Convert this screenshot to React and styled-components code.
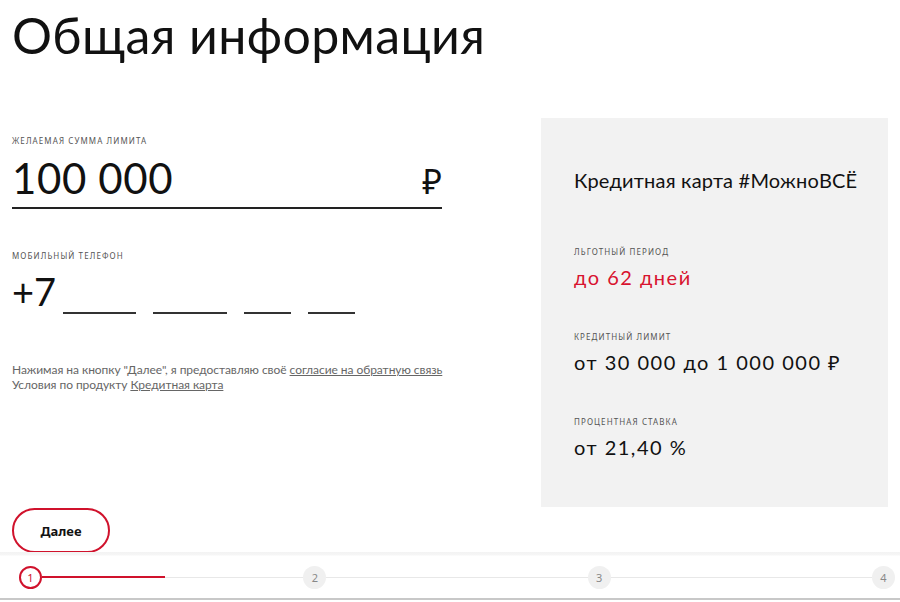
import React from 'react';
import styled, { createGlobalStyle } from 'styled-components';

const GlobalStyle = createGlobalStyle`
    html, body {
        margin: 0;
        padding: 0;
        background: #fff;
        font-family: Lato, "Noto Sans", sans-serif;
        color: #111;
    }
`;

const Page = styled.div`
    width: 900px;
    height: 602px;
    overflow: hidden;
    display: flex;
    flex-direction: column;
`;

const Title = styled.h1`
    margin: 0;
    padding: 2px 0 0 12px;
    height: 116px;
    font-weight: 400;
    font-size: 50px;
    line-height: 66px;
    letter-spacing: 0.4px;
`;

const Content = styled.div`
    display: flex;
    height: 389px;
    padding-left: 12px;
`;

const Form = styled.div`
    width: 430px;
    padding-top: 18px;
    margin-right: 99px;
`;

const Label = styled.div`
    font-size: 8px;
    line-height: 10px;
    letter-spacing: 1.1px;
    text-transform: uppercase;
    color: #555;
    font-family: "Noto Sans", sans-serif;
`;

const AmountRow = styled.div`
    display: flex;
    justify-content: space-between;
    align-items: baseline;
    border-bottom: 2px solid #222;
    height: 58px;
    margin-top: 5px;
    box-sizing: border-box;
`;

const Amount = styled.div`
    font-size: 42px;
    line-height: 54px;
    letter-spacing: 0.6px;
`;

const Ruble = styled.div`
    font-size: 34px;
    line-height: 54px;
`;

const Field = styled.div`
    margin-top: ${p => p.$top}px;
`;

const PhoneRow = styled.div`
    display: flex;
    align-items: flex-end;
    margin-top: 10px;
    height: 40px;
`;

const Prefix = styled.div`
    font-size: 38px;
    line-height: 40px;
    margin-right: 7px;
`;

const Blank = styled.div`
    width: ${p => p.$w}px;
    border-bottom: 2px solid #333;
    margin-right: 17px;
    margin-bottom: -3px;
`;

const Note = styled.p`
    margin: 51px 0 0;
    font-size: 12px;
    line-height: 15px;
    letter-spacing: -0.05px;
    color: #666;
    white-space: nowrap;
`;

const Link = styled.a`
    color: #666;
    text-decoration: underline;
`;

const Panel = styled.div`
    width: 347px;
    background: #f2f2f2;
    padding: 48px 0 0 33px;
    box-sizing: border-box;
`;

const CardName = styled.div`
    font-size: 20px;
    line-height: 28px;
    letter-spacing: 0.2px;
    margin-bottom: 53px;
`;

const Block = styled.div`
    margin-bottom: 42px;
`;

const Value = styled.div`
    margin-top: 7px;
    font-size: 20px;
    line-height: 26px;
    letter-spacing: 1.5px;
    color: ${p => (p.$accent ? '#d8132f' : '#111')};
`;

const ButtonRow = styled.div`
    padding: 1px 0 0 12px;
    height: 46px;
`;

const NextButton = styled.button`
    width: 98px;
    height: 45px;
    border: 2px solid #d0122c;
    border-radius: 23px;
    background: #fff;
    font-family: "Noto Sans", sans-serif;
    font-weight: 700;
    font-size: 13px;
    color: #111;
`;

const Stepper = styled.div`
    position: relative;
    z-index: 1;
    height: 48px;
    background: linear-gradient(#f3f3f3 0, #f6f6f6 3px, #fff 4px);
    border-bottom: 2px solid #c8c8c8;
    box-sizing: border-box;
    display: flex;
    align-items: center;
    padding: 0 5px 0 19px;
    margin-top: -2px;
`;

const Track = styled.div`
    flex: 1;
    display: flex;
    align-items: center;
    justify-content: space-between;
    margin-top: 4px;
    background: linear-gradient(#e8e8e8, #e8e8e8) no-repeat 0 50% / 100% 1px;
`;

const Progress = styled.div`
    position: absolute;
    left: 42px;
    top: 50%;
    margin-top: 1px;
    width: 123px;
    height: 2px;
    background: #d0122c;
`;

const Step = styled.div`
    width: 23px;
    height: 23px;
    border-radius: 50%;
    box-sizing: border-box;
    display: flex;
    align-items: center;
    justify-content: center;
    font-size: 11px;
    font-family: "Noto Sans", sans-serif;
    color: ${p => (p.$active ? '#d0122c' : '#888')};
    background: ${p => (p.$active ? '#fff' : '#f0f0f0')};
    border: ${p => (p.$active ? '2px solid #d0122c' : 'none')};
`;

export default function App() {
    return (
    <>
    <GlobalStyle />
    <Page>
        <Title>Общая информация</Title>
        <Content>
            <Form>
                <Label>Желаемая сумма лимита</Label>
                <AmountRow>
                    <Amount>100 000</Amount>
                    <Ruble>₽</Ruble>
                </AmountRow>
                <Field $top={42}>
                    <Label>Мобильный телефон</Label>
                    <PhoneRow>
                        <Prefix>+7</Prefix>
                        <Blank $w={73} />
                        <Blank $w={74} />
                        <Blank $w={47} />
                        <Blank $w={47} />
                    </PhoneRow>
                </Field>
                <Note>
                    Нажимая на кнопку "Далее", я предоставляю своё <Link>согласие на обратную связь</Link>
                    <br />
                    Условия по продукту <Link>Кредитная карта</Link>
                </Note>
            </Form>
            <Panel>
                <CardName>Кредитная карта #МожноВСЁ</CardName>
                <Block>
                    <Label>Льготный период</Label>
                    <Value $accent>до 62 дней</Value>
                </Block>
                <Block>
                    <Label>Кредитный лимит</Label>
                    <Value>от 30 000 до 1 000 000 ₽</Value>
                </Block>
                <Block>
                    <Label>Процентная ставка</Label>
                    <Value>от 21,40 %</Value>
                </Block>
            </Panel>
        </Content>
        <ButtonRow>
            <NextButton>Далее</NextButton>
        </ButtonRow>
        <Stepper>
            <Progress />
            <Track>
                <Step $active>1</Step>
                <Step>2</Step>
                <Step>3</Step>
                <Step>4</Step>
            </Track>
        </Stepper>
    </Page>
    </>
    );
}
